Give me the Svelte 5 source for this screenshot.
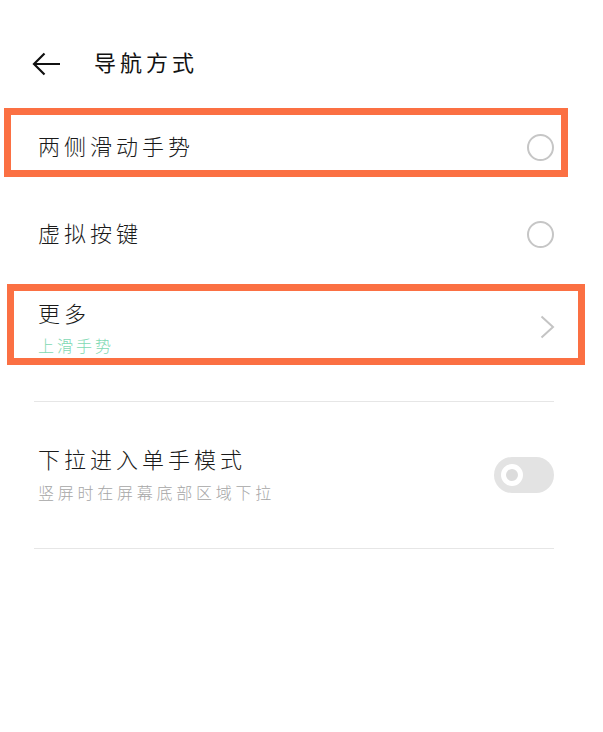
<script>
    let title = "导航方式";
</script>

<div class="page">
    <header class="topbar">
        <svg class="back" width="28" height="24" viewBox="0 0 28 24" fill="none" stroke="#111" stroke-width="2.2">
            <path d="M28 12H2M12.5 1.5 2 12l10.5 10.5" />
        </svg>
        <h1>{title}</h1>
    </header>

    <div class="row first marked">
        <span class="label">两侧滑动手势</span>
        <span class="radio"></span>
    </div>

    <div class="row plain">
        <span class="label">虚拟按键</span>
        <span class="radio"></span>
    </div>

    <div class="row more marked">
        <div class="stack">
            <span class="label">更多</span>
            <span class="sub green">上滑手势</span>
        </div>
        <svg class="chevron" width="15" height="24" viewBox="0 0 15 24" fill="none" stroke="#c4c4c4" stroke-width="2">
            <path d="M1.5 1.5 13 12 1.5 22.5" />
        </svg>
    </div>

    <div class="section">
        <div class="onehand">
            <div class="stack">
                <span class="label">下拉进入单手模式</span>
                <span class="sub">竖屏时在屏幕底部区域下拉</span>
            </div>
            <div class="toggle"><span class="knob"></span></div>
        </div>
    </div>
</div>

<style>
    :global(body) {
        margin: 0;
        background: #fff;
    }

    .page {
        width: 603px;
        height: 732px;
        overflow: hidden;
        background: #fff;
        font-family: "Noto Sans CJK SC", "Noto Sans", sans-serif;
        font-weight: 300;
    }

    .topbar {
        display: flex;
        align-items: center;
        height: 108px;
        padding: 19px 0 0 32px;
        box-sizing: border-box;
    }

    .back {
        flex: none;
        margin-right: 34px;
    }

    h1 {
        margin: 0 0 5px;
        font-size: 22px;
        font-weight: 400;
        letter-spacing: 4px;
        line-height: 30px;
        color: #111;
    }

    .row {
        display: flex;
        align-items: center;
        justify-content: space-between;
        box-sizing: border-box;
    }

    .row > .label {
        margin-bottom: 6px;
    }

    .marked {
        border: 7px solid #fb7043;
    }

    .first {
        width: 564px;
        height: 69px;
        margin-left: 4px;
        padding: 10px 7px 0 27px;
    }

    .plain {
        width: 516px;
        height: 107px;
        margin-left: 38px;
        padding-top: 8px;
    }

    .more {
        width: 578px;
        height: 81px;
        margin-left: 7px;
        padding: 4px 23px 0 24px;
    }

    .label {
        font-size: 22px;
        line-height: 30px;
        letter-spacing: 4px;
        color: #1a1a1a;
    }

    .sub {
        font-size: 16px;
        line-height: 22px;
        letter-spacing: 3.75px;
        color: #a6a6a6;
    }

    .sub.green {
        letter-spacing: 3px;
        color: #7fd9b4;
    }

    .stack {
        display: flex;
        flex-direction: column;
    }

    .more .stack {
        gap: 7px;
    }

    .onehand .stack {
        gap: 8px;
        margin-bottom: 4px;
    }

    .radio {
        flex: none;
        width: 27px;
        height: 27px;
        box-sizing: border-box;
        border: 2px solid #c6c6c6;
        border-radius: 50%;
    }

    .chevron {
        flex: none;
    }

    .section {
        margin: 36px 49px 0 34px;
        height: 146px;
        border-top: 1px solid #e6e6e6;
        border-bottom: 1px solid #e6e6e6;
        display: flex;
        align-items: center;
        padding-left: 4px;
    }

    .onehand {
        flex: 1;
        display: flex;
        align-items: center;
        justify-content: space-between;
    }

    .toggle {
        display: flex;
        align-items: center;
        width: 60px;
        height: 36px;
        padding-left: 7px;
        box-sizing: border-box;
        border-radius: 18px;
        background: #e3e3e3;
    }

    .knob {
        width: 22px;
        height: 22px;
        box-sizing: border-box;
        border: 5px solid #fff;
        border-radius: 50%;
        background: #dcdcdc;
    }
</style>
